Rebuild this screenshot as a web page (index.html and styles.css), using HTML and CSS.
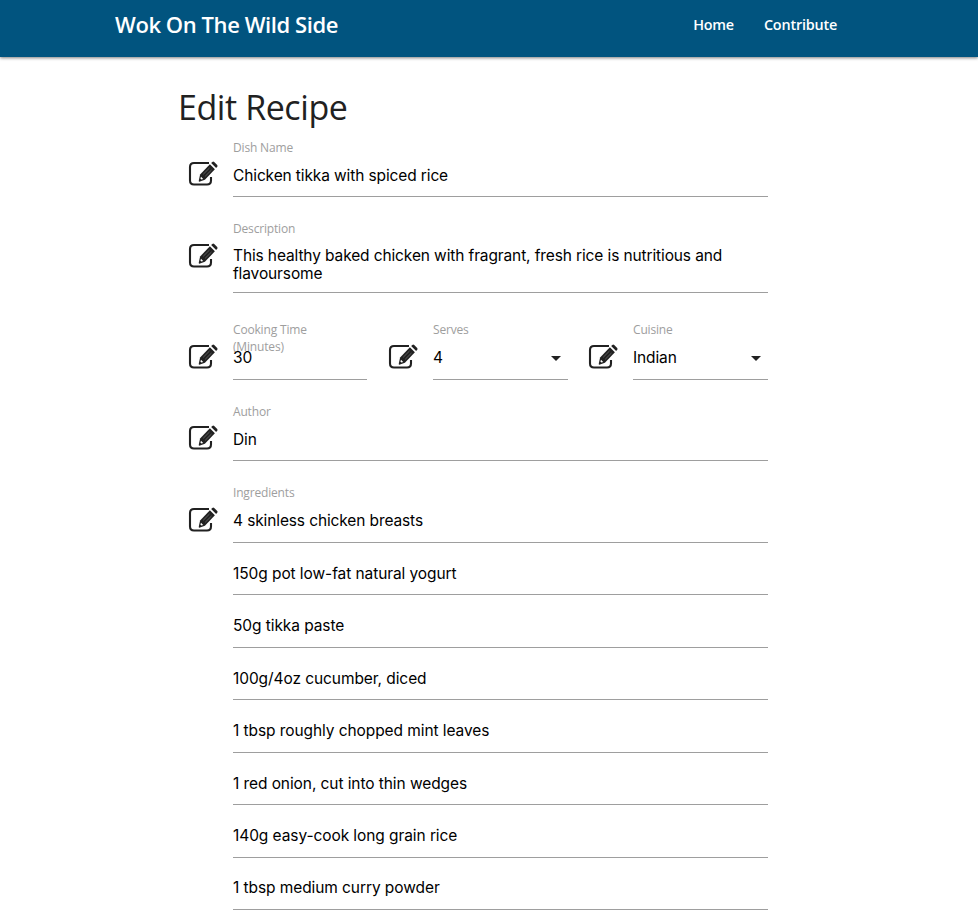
FILE: index.html
```html
<!DOCTYPE html>
<html lang="en">
<head>
<meta charset="utf-8">
<title>Edit Recipe</title>
<link rel="stylesheet" href="styles.css">
</head>
<body>
<svg width="0" height="0" class="defs">
  <symbol id="edit" viewBox="0 0 30 26">
    <path d="M21 2H6Q2 2 2 6v13.5q0 4 4 4h13q4 0 4-4v-3.6" fill="none" stroke="currentColor" stroke-width="2.1"/>
    <path d="M21.9 3.3l5 5L16.9 18.8l-4.9 1.8q-1.5.4-1.2-1.1l1.3-6z" fill="currentColor"/>
    <path d="M23.1 2.1l1.2-1.2q1-.8 1.9 0l3 3q.8.9 0 1.9L28.1 7.100z" fill="currentColor"/>
    <path d="M21.5 7l-6.300 6.300M23.500 9l-6.300 6.300" stroke="#999" stroke-width=".5"/>
    <path d="M13 15.700l2.200 2.200-1.800.7-1-1z" fill="#fff"/>
  </symbol>
</svg>
<header class="navbar">
  <a class="brand">Wok On The Wild Side</a>
  <nav class="links"><a>Home</a><a>Contribute</a></nav>
</header>
<main class="page">
  <h1>Edit Recipe</h1>
  <form>
    <div class="row dish">
      <svg class="icon"><use href="#edit"/></svg>
      <div class="field"><label>Dish Name</label><div class="value low">Chicken tikka with spiced rice</div></div>
    </div>
    <div class="row description">
      <svg class="icon"><use href="#edit"/></svg>
      <div class="field"><label class="raised">Description</label><div class="value multiline">This healthy baked chicken with fragrant, fresh rice is nutritious and flavoursome</div></div>
    </div>
    <div class="columns">
      <div class="row time">
        <svg class="icon"><use href="#edit"/></svg>
        <div class="field"><label class="raised narrow">Cooking Time (Minutes)</label><div class="value">30</div></div>
      </div>
      <div class="row">
        <svg class="icon"><use href="#edit"/></svg>
        <div class="field"><label class="raised">Serves</label><div class="value select">4<i class="caret"></i></div></div>
      </div>
      <div class="row">
        <svg class="icon"><use href="#edit"/></svg>
        <div class="field"><label class="raised">Cuisine</label><div class="value select">Indian<i class="caret"></i></div></div>
      </div>
    </div>
    <div class="row author">
      <svg class="icon"><use href="#edit"/></svg>
      <div class="field"><label>Author</label><div class="value low">Din</div></div>
    </div>
    <div class="row ingredients">
      <svg class="icon"><use href="#edit"/></svg>
      <div class="field">
        <label class="raised">Ingredients</label>
        <div class="value">4 skinless chicken breasts</div>
        <div class="value extra">150g pot low-fat natural yogurt</div>
        <div class="value extra">50g tikka paste</div>
        <div class="value extra">100g/4oz cucumber, diced</div>
        <div class="value extra">1 tbsp roughly chopped mint leaves</div>
        <div class="value extra">1 red onion, cut into thin wedges</div>
        <div class="value extra">140g easy-cook long grain rice</div>
        <div class="value extra">1 tbsp medium curry powder</div>
      </div>
    </div>
  </form>
</main>
</body>
</html>
```
FILE: styles.css
```css
* { box-sizing: border-box; }
body {
  margin: 0;
  height: 918px;
  overflow: hidden;
  background: #fff;
  color: #212121;
  font-family: "Open Sans", sans-serif;
}
.defs { display: block; height: 0; }
.navbar {
  display: flex;
  justify-content: space-between;
  height: 57px;
  padding: 0 141px 0 115px;
  background: #01547f;
  color: #fff;
  font-weight: 600;
  line-height: 50px;
  box-shadow: 0 1px 3px rgba(0, 0, 0, .5);
}
.brand { font-size: 22px; line-height: 49px; letter-spacing: -.42px; }
.links { display: flex; gap: 30px; font-size: 14.4px; letter-spacing: -.2px; }
.page { width: 589px; margin-left: 179px; }
h1 {
  margin: 0 0 0 -1px;
  padding-top: 30px;
  height: 82px;
  font-size: 34px;
  font-weight: 400;
  line-height: 40px;
  letter-spacing: -.42px;
}
.row {
  display: grid;
  grid-template-columns: 54px minmax(0, 1fr);
  margin-bottom: 24px;
}
.icon { width: 30px; height: 26px; margin: 22px 0 0 9px; }
label {
  display: block;
  height: 17px;
  color: #9e9e9e;
  font-size: 12px;
  line-height: 17px;
  letter-spacing: -.17px;
}
.raised { height: 18px; margin-top: -1px; }
label.narrow { width: 100px; }
.value {
  height: 41px;
  border-bottom: 1px solid #9e9e9e;
  color: #000;
  font-family: Inter, sans-serif;
  font-size: 15.5px;
  line-height: 38px;
  letter-spacing: -.12px;
}
.low { padding-top: 1px; }
.multiline { height: 55px; padding-top: 9px; line-height: 18px; }
.description { margin-bottom: 29px; }
.columns {
  display: grid;
  grid-template-columns: 200px 200px 189px;
}
.columns .row { width: 189px; margin-bottom: 23px; }
.columns .time { width: 188px; }
.select {
  display: flex;
  justify-content: space-between;
}
.caret {
  margin: 17px 7px 0 0;
  width: 10px;
  height: 5px;
  background: #212121;
  clip-path: polygon(0 0, 100% 0, 50% 100%);
}
.ingredients { margin-bottom: 0; }
.extra { height: 52.45px; padding-top: 11.8px; letter-spacing: -.08px; }
```
